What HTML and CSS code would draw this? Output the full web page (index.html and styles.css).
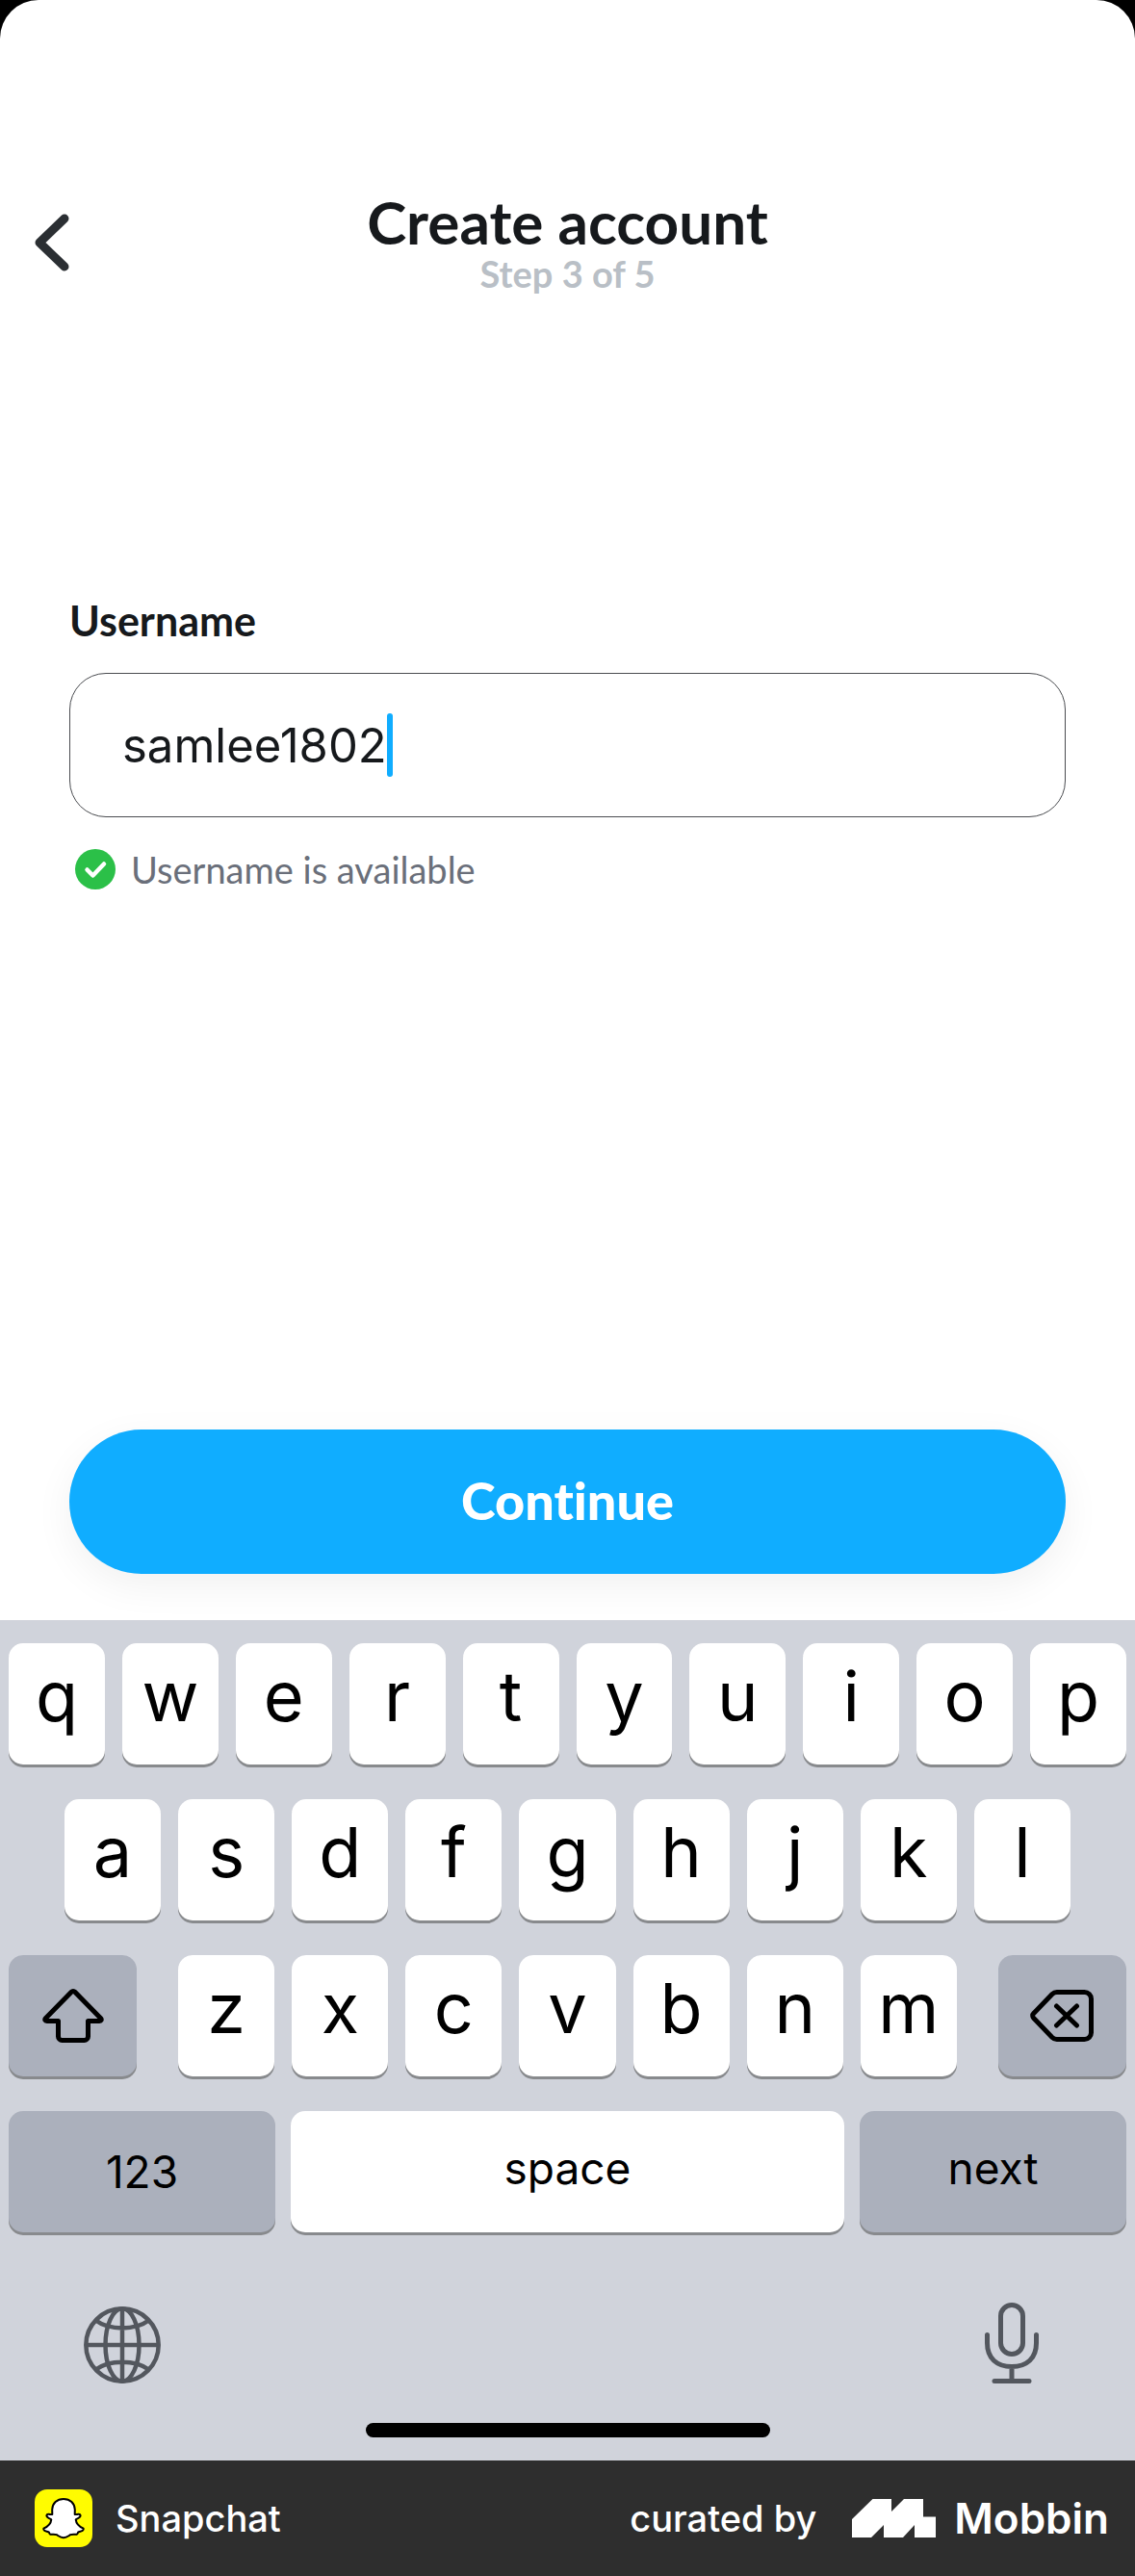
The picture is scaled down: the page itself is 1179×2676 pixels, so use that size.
FILE: index.html
```
<!DOCTYPE html>
<html lang="en">
<head>
<meta charset="utf-8">
<meta name="viewport" content="width=device-width, initial-scale=1">
<title>Create account</title>
<link rel="stylesheet" href="styles.css">
</head>
<body>
<div class="phone">
  <form class="screen">
    <header class="header">
      <button class="back" type="button" aria-label="Back">
        <svg width="36" height="60" viewBox="0 0 36 60" fill="none" stroke="#2b2f33" stroke-width="9" stroke-linecap="round" stroke-linejoin="round"><path d="M31 5 5 30l26 25"/></svg>
      </button>
      <h1 class="title">Create account</h1>
      <p class="step">Step 3 of 5</p>
    </header>

    <div class="field">
      <label class="label" for="username">Username</label>
      <div class="box">
        <input class="input" id="username" type="text" value="samlee1802" autocomplete="off" spellcheck="false">
        <span class="caret"></span>
      </div>
      <p class="hint">
        <svg width="42" height="42" viewBox="0 0 42 42"><circle cx="21" cy="21" r="21" fill="#2bc048"/><path d="m12.500 21.500 6 6 11.500-12" fill="none" stroke="#fff" stroke-width="4.500" stroke-linecap="round" stroke-linejoin="round"/></svg>
        Username is available
      </p>
    </div>

    <button class="continue" type="submit">Continue</button>
  </form>

  <section class="keyboard" aria-label="Keyboard">
    <div class="row">
      <button class="key">q</button><button class="key">w</button><button class="key">e</button><button class="key">r</button><button class="key">t</button><button class="key">y</button><button class="key">u</button><button class="key">i</button><button class="key">o</button><button class="key">p</button>
    </div>
    <div class="row row-home">
      <button class="key">a</button><button class="key">s</button><button class="key">d</button><button class="key">f</button><button class="key">g</button><button class="key">h</button><button class="key">j</button><button class="key">k</button><button class="key">l</button>
    </div>
    <div class="row row-edit">
      <button class="key key-dark" aria-label="Shift">
        <svg width="64" height="56" viewBox="0 0 64 56" fill="none" stroke="#000" stroke-width="5" stroke-linejoin="round"><path d="M30.200 3.300a2.500 2.500 0 0 1 3.600 0L60.500 30.500c1.400 1.500.7 3-1.200 3H47.500V49.500a4 4 0 0 1-4 4h-23a4 4 0 0 1-4-4V33.500H4.700c-1.900 0-2.600-1.500-1.200-3z"/></svg>
      </button>
      <div class="letters">
        <button class="key">z</button><button class="key">x</button><button class="key">c</button><button class="key">v</button><button class="key">b</button><button class="key">n</button><button class="key">m</button>
      </div>
      <button class="key key-dark" aria-label="Delete">
        <svg width="66" height="54" viewBox="0 0 66 54" fill="none" stroke="#000" stroke-width="5" stroke-linecap="round" stroke-linejoin="round"><path d="M28 2.500H56.500a7 7 0 0 1 7 7v35a7 7 0 0 1-7 7H28a7 7 0 0 1-5-2L3.800 29.600a3.600 3.600 0 0 1 0-5.200L23 4.500a7 7 0 0 1 5-2zM27.500 17l21 20m0-20-21 20"/></svg>
      </button>
    </div>
    <div class="row row-space">
      <button class="key key-dark key-word">123</button>
      <button class="key key-word key-lower key-space">space</button>
      <button class="key key-dark key-word key-lower">next</button>
    </div>
    <div class="tools">
      <button class="tool" aria-label="Next keyboard">
        <svg width="80" height="80" viewBox="0 0 80 80" fill="none" stroke="#53575e" stroke-width="4.500"><circle cx="40" cy="40" r="37.700"/><ellipse cx="40" cy="40" rx="17.500" ry="37.700"/><path d="M40 2v76M2 40h76M12.500 14.500c14 10.500 41 10.500 55 0M12.500 65.500c14-10.500 41-10.500 55 0"/></svg>
      </button>
      <button class="tool" aria-label="Dictate">
        <svg width="56" height="84" viewBox="0 0 56 84" fill="none" stroke="#53575e" stroke-width="5" stroke-linecap="round"><rect x="16.500" y="2.500" width="23" height="51" rx="11.500"/><path d="M2.500 33.500V42c0 16 10 24.500 25.500 24.500S53.500 58 53.500 42v-8.500M28 67v14M10 81.500h36"/></svg>
      </button>
    </div>
    <div class="home-bar"></div>
  </section>

  <footer class="footer">
    <svg class="app-icon" width="60" height="60" viewBox="0 0 60 60"><rect width="60" height="60" rx="13" fill="#fffc00"/><path d="M30 10c-7 0-11.500 4.500-11.800 11l.1 5c-1.600.6-4.200-1-5.500.3-1.500 2 2 3.700 4.500 5-.5 5-4 7.500-8 9.400-.8 2.300 3.500 3 5.500 3.800.6 1.200.5 2 1.500 2.200 2 .2 4.500-.5 6.500.5 2.200 1.300 4 3 7.200 3s5-1.700 7.200-3c2-1 4.500-.3 6.500-.5 1-.2.900-1 1.500-2.200 2-.8 6.300-1.500 5.500-3.800-4-1.900-7.500-4.400-8-9.400 2.500-1.300 6-3 4.500-5-1.300-1.300-3.900.3-5.500-.3l.1-5C41.500 14.500 37 10 30 10z" fill="#fff" stroke="#000" stroke-width="2" stroke-linejoin="round"/></svg>
    <span class="app-name">Snapchat</span>
    <span class="curated">curated by</span>
    <a class="brand" href="#">
      <svg width="87" height="40" viewBox="0 0 87 40" fill="#fff"><path d="M0 21 21.500 0H41v13L54 0h20v18.500h13V40H65V27L53 40H33V27L20 40H0z"/></svg>
      Mobbin
    </a>
  </footer>
</div>
</body>
</html>
```
FILE: styles.css
```
* {
  box-sizing: border-box;
}

body {
  margin: 0;
  background: #000;
  color: #16191c;
  font-family: Lato, "Open Sans", sans-serif;
}

button {
  border: 0;
  padding: 0;
  background: none;
  color: inherit;
  font: inherit;
}

h1,
p {
  margin: 0;
}

svg {
  display: block;
  flex: none;
}

.phone {
  display: flex;
  flex-direction: column;
  min-height: 100vh;
}

/* Sign-up form */
.screen {
  flex: 1;
  display: flex;
  flex-direction: column;
  padding: 197px 72px 48px;
  background: #fff;
  border-radius: 40px 40px 0 0;
}

.header {
  position: relative;
  text-align: center;
}

.back {
  position: absolute;
  left: -36px;
  top: 25px;
}

.title {
  font-size: 62px;
  line-height: 66px;
  font-weight: 700;
}

.step {
  font-size: 38px;
  line-height: 42px;
  font-weight: 700;
  color: #b9bfc6;
}

.field {
  margin-top: 316px;
}

.label {
  display: block;
  font-size: 43px;
  line-height: 48px;
  font-weight: 700;
}

.box {
  display: flex;
  align-items: center;
  height: 150px;
  margin-top: 30px;
  padding: 0 54px;
  border: 1px solid #4a4c50;
  border-radius: 38px;
}

.input {
  field-sizing: content;
  padding: 2px 0 0;
  border: 0;
  outline: 0;
  background: none;
  color: inherit;
  caret-color: transparent;
  font-family: Inter, sans-serif;
  font-size: 49px;
  line-height: 60px;
}

.caret {
  width: 6px;
  height: 66px;
  border-radius: 3px;
  background: #10adff;
}

.hint {
  display: flex;
  align-items: center;
  gap: 16px;
  margin-top: 30px;
  padding-left: 6px;
  font-size: 38px;
  line-height: 48px;
  color: #6a6f7a;
}

.continue {
  height: 150px;
  margin-top: auto;
  padding-bottom: 4px;
  border-radius: 75px;
  background: #10adff;
  box-shadow: 0 12px 40px rgba(0, 0, 0, 0.06);
  color: #fff;
  font-size: 54px;
  font-weight: 900;
  font-variant-ligatures: none;
}

/* Keyboard */
.keyboard {
  display: flex;
  flex-direction: column;
  gap: 36px;
  padding: 24px 9px;
  background: #d0d3db;
  color: #000;
  font-family: Inter, sans-serif;
}

.row,
.letters {
  display: flex;
  gap: 18px;
}

.row-home {
  padding: 0 58px;
}

.row-edit {
  gap: 43px;
}

.row-space {
  gap: 16px;
}

.letters {
  flex: 808;
}

.key {
  display: flex;
  justify-content: center;
  flex: 1 1 0;
  height: 126px;
  border-radius: 15px;
  background: #fff;
  box-shadow: 0 3px 0 #888a8d;
  font-size: 72px;
  font-weight: 400;
  line-height: 110px;
}

.key-dark {
  align-items: center;
  background: #abb0bc;
}

.row-edit .key-dark {
  flex: 133;
}

.key-word {
  align-items: center;
  flex: 277;
  font-size: 46px;
  line-height: 120px;
}

.key-lower {
  padding-bottom: 8px;
}

.key-space {
  flex: 575;
}

.tools {
  display: flex;
  align-items: flex-end;
  justify-content: space-between;
  height: 85px;
  margin-top: 36px;
  padding: 0 91px 0 78px;
}

.home-bar {
  align-self: center;
  width: 420px;
  height: 15px;
  margin-top: 5px;
  border-radius: 8px;
  background: #000;
}

/* Attribution bar */
.footer {
  display: flex;
  align-items: center;
  height: 120px;
  padding: 0 27px 0 36px;
  background: #2e2e2e;
  color: #fff;
  font-family: Inter, sans-serif;
  font-size: 38px;
  font-weight: 500;
}

.app-name {
  margin-left: 24px;
}

.curated {
  margin-left: auto;
}

.brand {
  display: flex;
  align-items: center;
  gap: 19px;
  margin-left: 37px;
  color: inherit;
  font-size: 44px;
  font-weight: 600;
  text-decoration: none;
}
```
